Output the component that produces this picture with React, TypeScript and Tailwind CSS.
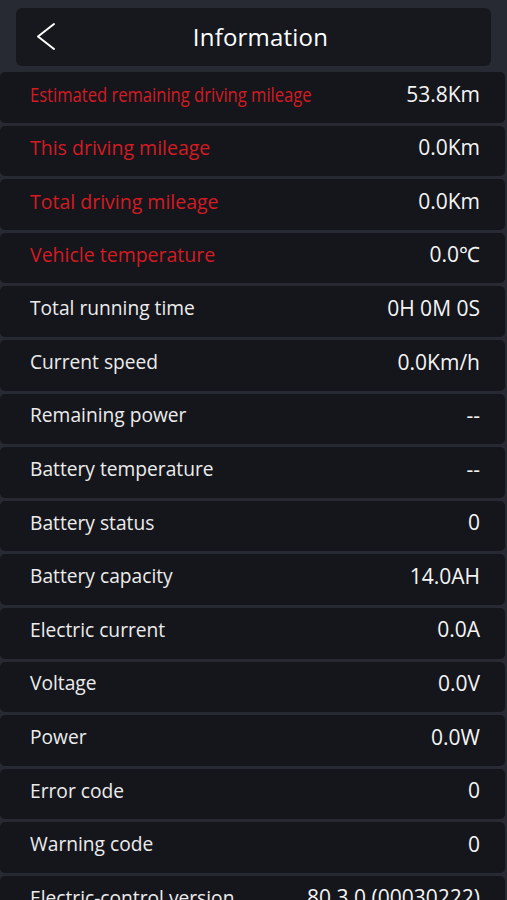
interface Row {
  label: string
  value: string
  alert?: boolean
  squeeze?: boolean
}

const rows: Row[] = [
  { label: 'Estimated remaining driving mileage', value: '53.8Km', alert: true, squeeze: true },
  { label: 'This driving mileage', value: '0.0Km', alert: true },
  { label: 'Total driving mileage', value: '0.0Km', alert: true },
  { label: 'Vehicle temperature', value: '0.0℃', alert: true },
  { label: 'Total running time', value: '0H 0M 0S' },
  { label: 'Current speed', value: '0.0Km/h' },
  { label: 'Remaining power', value: '--' },
  { label: 'Battery temperature', value: '--' },
  { label: 'Battery status', value: '0' },
  { label: 'Battery capacity', value: '14.0AH' },
  { label: 'Electric current', value: '0.0A' },
  { label: 'Voltage', value: '0.0V' },
  { label: 'Power', value: '0.0W' },
  { label: 'Error code', value: '0' },
  { label: 'Warning code', value: '0' },
  { label: 'Electric-control version', value: '80.3.0 (00030222)' },
]

function labelClass(row: Row) {
  if (row.squeeze) return 'text-[19.5px] text-[#d41b22] scale-x-[0.85] origin-left whitespace-nowrap'
  if (row.alert) return 'text-[19.5px] text-[#d41b22] whitespace-nowrap'
  return 'text-[19.2px] text-[#ececec] whitespace-nowrap'
}

export default function App() {
  return (
    <div
      className="w-[507px] h-[900px] overflow-hidden bg-[#282a33] flex flex-col"
      style={{ fontFamily: '"Open Sans", "Noto Sans", sans-serif' }}
    >
      {/* Header */}
      <div className="px-4 pt-2 pb-[6px] shrink-0">
        <div className="h-[58px] rounded-md bg-[#17181e] relative flex items-center justify-center pl-[14px]">
          <svg
            className="absolute left-[20px] top-[14px] w-[20px] h-[30px]"
            viewBox="0 0 20 30"
            fill="none"
            stroke="white"
            strokeWidth={2}
            strokeLinecap="round"
            strokeLinejoin="round"
          >
            <polyline points="18,2 2,14.5 18,27" />
          </svg>
          <h1 className="text-[24px] text-white tracking-[0.2px]">Information</h1>
        </div>
      </div>

      {/* Rows */}
      <div className="flex flex-col gap-[3px] pr-[2px]">
        {rows.map((row) => (
          <div
            key={row.label}
            className="h-[50.6px] shrink-0 rounded-[5px] bg-[#15161c] flex items-center justify-between pl-[30px] pr-[25px] pb-[6px]"
          >
            <span className={labelClass(row)}>{row.label}</span>
            <span className="text-[21px] text-[#f4f4f4] whitespace-nowrap">{row.value}</span>
          </div>
        ))}
      </div>
    </div>
  )
}
